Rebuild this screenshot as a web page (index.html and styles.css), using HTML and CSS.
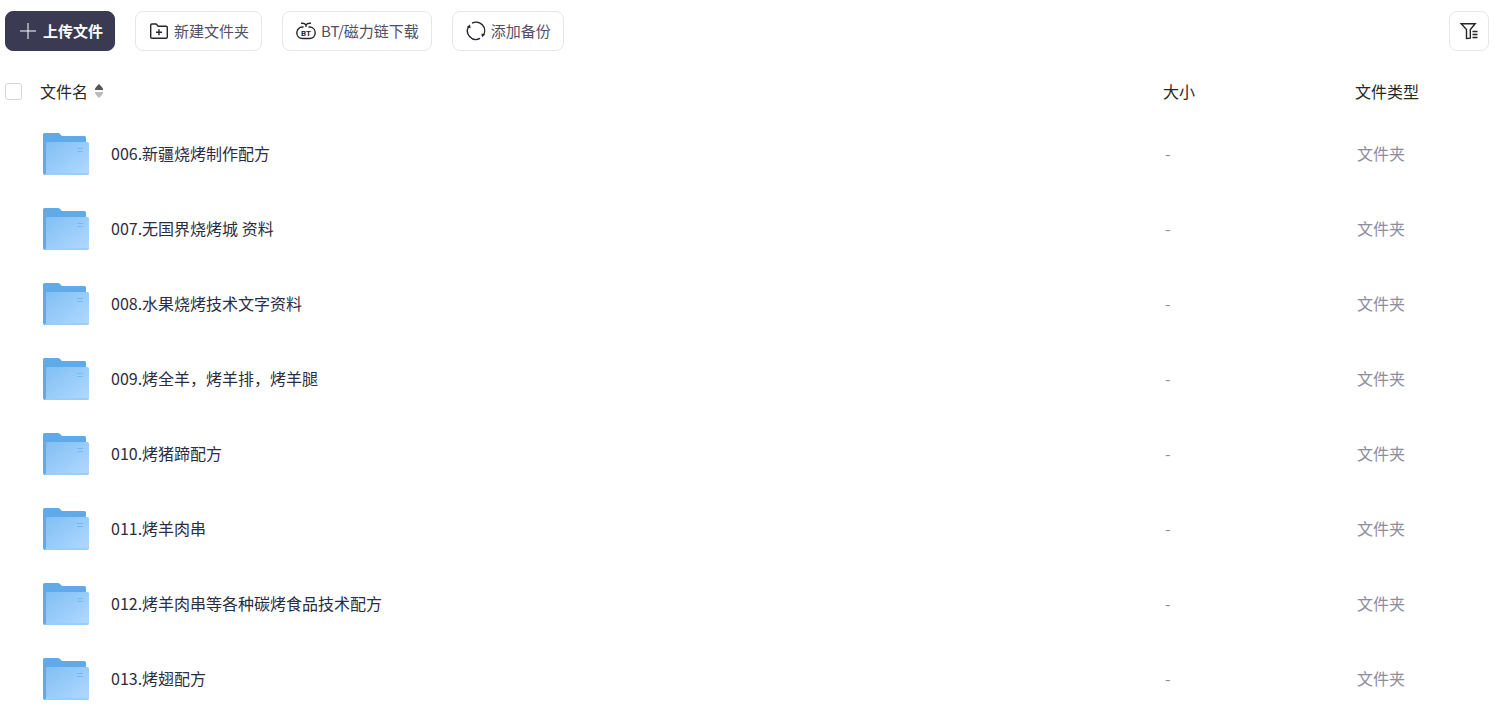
FILE: index.html
```
<!DOCTYPE html>
<html lang="zh-CN">
<head>
<meta charset="utf-8">
<title>文件列表</title>
<link rel="stylesheet" href="styles.css">
</head>
<body>
<svg class="defs" aria-hidden="true">
  <defs>
    <linearGradient id="front" x1="0" y1="0" x2="1" y2="1">
      <stop offset="0" stop-color="#7fbff4"/>
      <stop offset="1" stop-color="#b2d9ff"/>
    </linearGradient>
    <symbol id="folder" viewBox="0 0 46 42">
      <path d="M1.500 0H15Q16 0 17 1L19 3H41.500Q43 3 43 4.500V38H4V42H1.500Q0 41.500 0 40V1.500Q0 0 1.500 0Z" fill="#5fabea"/>
      <path d="M4 9H44.500Q46 9 46 10.500V40Q46 42 44 42H2Q3 41 3 39V10Q3 9 4 9Z" fill="url(#front)"/>
      <path d="M3 40H46Q46 42 44 42H1.500Q3 41.500 3 40Z" fill="#9bcdf9"/>
      <path d="M34 15.500H40M34 18.500H40" stroke="#79b9f2"/>
    </symbol>
  </defs>
</svg>
<header class="toolbar">
  <button class="btn btn-primary" type="button">
    <svg class="icon-plus" viewBox="0 0 16 16"><path d="M8 0V16M0 8H16"/></svg>
    <span>上传文件</span>
  </button>
  <button class="btn" type="button">
    <svg class="icon" viewBox="0 0 20 20"><path d="M1.700 16V4.200Q1.700 3 2.900 3H7.100L9.200 5.200H17.100Q18.300 5.200 18.300 6.400V16Q18.300 17.200 17.100 17.200H2.900Q1.700 17.200 1.700 16ZM10 8.200V14.200M7 11.200H13"/></svg>
    <span>新建文件夹</span>
  </button>
  <button class="btn" type="button">
    <svg class="icon" viewBox="0 0 20 20"><path d="M6.500 6C3.200 6 .8 8.500.8 11.800S3.200 17.500 6.500 17.500H13.500C16.800 17.500 19.200 15.100 19.200 11.800S16.800 6 13.500 6M6.500 6H7.500M13.500 6H12.500M5 2.300Q8.500 1.800 10 4Q11.500 1.800 15 2.300M10 4V6"/><text class="icon-text" x="10" y="14.500">BT</text></svg>
    <span>BT/磁力链下载</span>
  </button>
  <button class="btn" type="button">
    <svg class="icon" viewBox="0 0 20 20"><path d="M6 2.200A8.500 8.500 0 0 1 17.300 14.200M14 17.400A8.500 8.500 0 0 1 2.700 5.500"/><path class="solid" d="M.8 6L4 3.400L4.600 7.200ZM19.200 13.600L16 16.200L15.400 12.400Z"/></svg>
    <span>添加备份</span>
  </button>
  <button class="btn btn-filter" type="button" aria-label="筛选">
    <svg class="icon" viewBox="0 0 20 20"><path d="M2.200 2.700H16.200L11.300 8.500V17.200L7.500 17.500V8.500Z"/><path d="M13.500 10.500H18.500M13.500 13.500H18.500M13.500 16.500H18.500"/></svg>
  </button>
</header>
<table class="files">
  <thead>
    <tr>
      <th class="col-check"><input class="check" type="checkbox" aria-label="全选"></th>
      <th><button class="sort" type="button">文件名<svg class="sort-icon" viewBox="0 0 8 14"><path d="M0 5Q0 4 4 0Q8 4 8 5V6H0Z" fill="#555"/><path d="M0 9V8H8V9Q8 10 4 14Q0 10 0 9Z" fill="#bbb"/></svg></button></th>
      <th class="col-size">大小</th>
      <th class="col-type">文件类型</th>
    </tr>
  </thead>
  <tbody>
    <tr><td></td><td><div class="name"><svg class="folder"><use href="#folder"/></svg><span>006.新疆烧烤制作配方</span></div></td><td class="meta">-</td><td class="meta">文件夹</td></tr>
    <tr><td></td><td><div class="name"><svg class="folder"><use href="#folder"/></svg><span>007.无国界烧烤城 资料</span></div></td><td class="meta">-</td><td class="meta">文件夹</td></tr>
    <tr><td></td><td><div class="name"><svg class="folder"><use href="#folder"/></svg><span>008.水果烧烤技术文字资料</span></div></td><td class="meta">-</td><td class="meta">文件夹</td></tr>
    <tr><td></td><td><div class="name"><svg class="folder"><use href="#folder"/></svg><span>009.烤全羊，烤羊排，烤羊腿</span></div></td><td class="meta">-</td><td class="meta">文件夹</td></tr>
    <tr><td></td><td><div class="name"><svg class="folder"><use href="#folder"/></svg><span>010.烤猪蹄配方</span></div></td><td class="meta">-</td><td class="meta">文件夹</td></tr>
    <tr><td></td><td><div class="name"><svg class="folder"><use href="#folder"/></svg><span>011.烤羊肉串</span></div></td><td class="meta">-</td><td class="meta">文件夹</td></tr>
    <tr><td></td><td><div class="name"><svg class="folder"><use href="#folder"/></svg><span>012.烤羊肉串等各种碳烤食品技术配方</span></div></td><td class="meta">-</td><td class="meta">文件夹</td></tr>
    <tr><td></td><td><div class="name"><svg class="folder"><use href="#folder"/></svg><span>013.烤翅配方</span></div></td><td class="meta">-</td><td class="meta">文件夹</td></tr>
  </tbody>
</table>
</body>
</html>
```
FILE: styles.css
```
* { box-sizing: border-box; }
body {
  margin: 0;
  background: #fff;
  color: #2c2d43;
  font: 16px/24px "Noto Sans CJK SC", sans-serif;
}
button { font: inherit; color: inherit; cursor: pointer; }
.defs { position: absolute; width: 0; height: 0; }

.toolbar {
  display: flex;
  gap: 20px;
  padding: 11px 13px 15px 5px;
}
.btn {
  display: flex;
  align-items: center;
  gap: 5px;
  height: 40px;
  padding: 0 12px 0 13px;
  border: 1px solid #e6e6e8;
  border-radius: 8px;
  background: #fff;
  color: #504f69;
  font-size: 15px;
  white-space: nowrap;
}
.btn-primary {
  gap: 7px;
  padding: 0 11px 0 14px;
  border-color: #3a3a52;
  background: #3a3a52;
  color: #fff;
  font-weight: 700;
}
.btn-filter {
  justify-content: center;
  width: 40px;
  margin-left: auto;
  padding: 0;
}
.icon, .icon-plus {
  flex: none;
  fill: none;
  stroke: #25252b;
  stroke-width: 1.4;
}
.icon { width: 20px; height: 20px; }
.icon-plus { width: 16px; height: 16px; stroke: #fff; stroke-width: 1; }
.icon .solid { fill: #25252b; stroke: none; }
.icon-text {
  fill: #25252b;
  stroke: none;
  font: 700 8px Roboto, sans-serif;
  text-anchor: middle;
}

.files { width: 100%; table-layout: fixed; border-collapse: collapse; }
.files th, .files td { padding: 0; text-align: left; vertical-align: middle; }
.files th { height: 50px; color: #282828; font-weight: 400; }
.files td { height: 75px; }
.files .col-check { width: 40px; padding-left: 5px; }
.col-size { width: 192px; }
.col-type { width: 147px; }
.check {
  display: block;
  appearance: none;
  width: 17px;
  height: 17px;
  margin: 0;
  border: 1px solid #d6d6d9;
  border-radius: 3px;
  background: #fff;
}
.check:checked { background: #3a3a52; }
.sort {
  display: flex;
  align-items: center;
  gap: 7px;
  padding: 0;
  border: 0;
  background: none;
}
.sort-icon { width: 8px; height: 14px; }
.name { display: flex; align-items: center; gap: 22px; padding-left: 3px; }
.name span { padding-bottom: 2px; }
.folder { flex: none; width: 46px; height: 42px; }
.files .meta { padding: 0 0 2px 2px; color: #8e8d9e; }
```
